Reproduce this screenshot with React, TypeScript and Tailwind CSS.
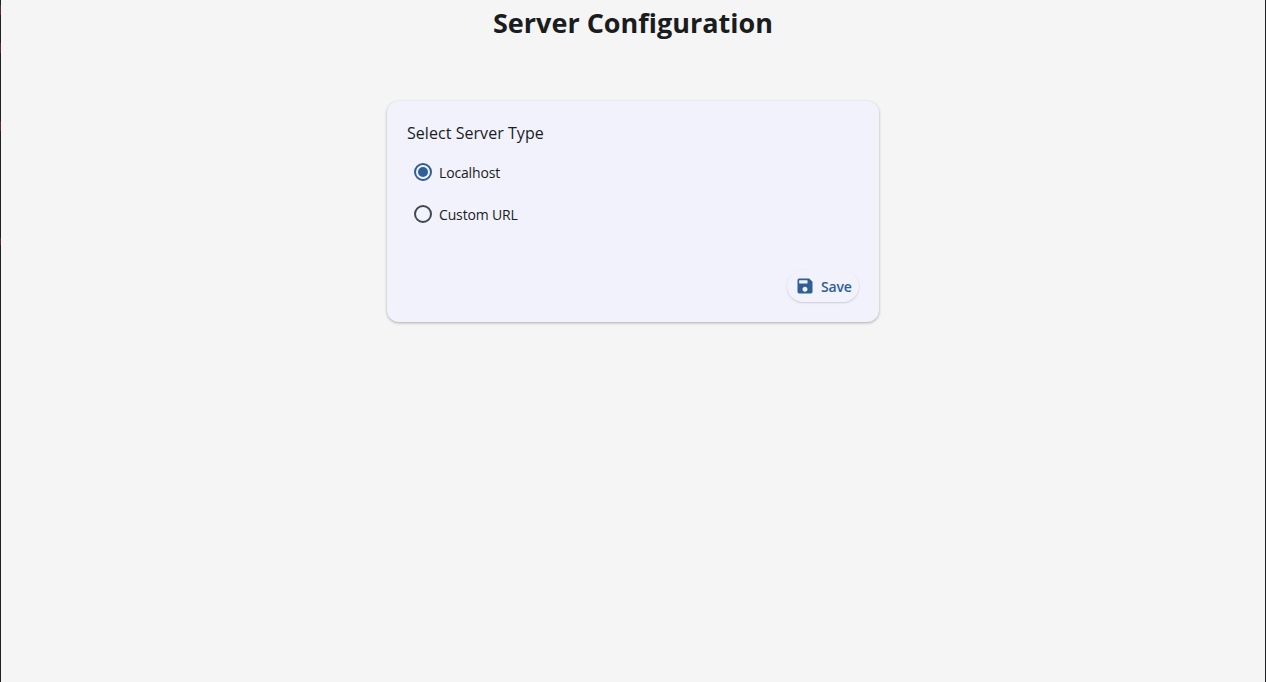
import React from "react"

// faint marks on the window's left edge
const edgeMarks = [
  { top: "top-[5px]", height: "h-[10px]" },
  { top: "top-[43px]", height: "h-[10px]" },
  { top: "top-[121px]", height: "h-[10px]" },
  { top: "top-[238px]", height: "h-[7px]" },
]

function SaveIcon() {
  return (
    <svg width="20" height="20" viewBox="0 0 24 24" fill="currentColor" aria-hidden="true">
      <path d="M17 3H5c-1.11 0-2 .9-2 2v14c0 1.1.89 2 2 2h14c1.1 0 2-.9 2-2V7l-4-4zm-5 16c-1.66 0-3-1.34-3-3s1.34-3 3-3 3 1.34 3 3-1.34 3-3 3zm3-10H5V5h10v4z" />
    </svg>
  )
}

function Radio({ label, checked }: { label: string; checked?: boolean }) {
  return (
    <label className="flex h-[42px] items-center pl-[7px]">
      <span
        className={`mb-[2px] flex h-[18px] w-[18px] items-center justify-center rounded-full border-2 ${
          checked ? "border-[#2f5f96]" : "border-[#44474e]"
        }`}
      >
        {checked && <span className="h-[10px] w-[10px] rounded-full bg-[#2f5f96]" />}
      </span>
      <span className="ml-[7px] text-[14px] leading-5 tracking-[-0.15px] text-[#1a1c1e]">{label}</span>
    </label>
  )
}

export default function App() {
  return (
    <div className="relative flex h-[682px] flex-col items-center border-x border-[#1f2023] bg-[#f5f5f5] font-['Open_Sans','Noto_Sans',sans-serif]">
      {edgeMarks.map((mark) => (
        <span key={mark.top} className={`absolute -left-px w-px bg-[#5a2a38] ${mark.top} ${mark.height}`} />
      ))}
      <h1 className="mt-[4px] text-[27px] leading-[37px] font-bold text-[#1a1c1e]">Server Configuration</h1>
      <div className="mt-[60px] flex h-[221px] w-[492px] flex-col rounded-xl bg-[#f1f2fb] p-5 shadow-[0_1px_3px_rgba(0,0,0,0.3)]">
        <h2 className="text-[16px] leading-6 font-medium tracking-[0.05px] text-[#1a1c1e]">Select Server Type</h2>
        <div className="mt-[7px] flex flex-col">
          <Radio label="Localhost" checked />
          <Radio label="Custom URL" />
        </div>
        <div className="mt-auto flex justify-end">
          <button className="flex h-8 w-[72px] items-center gap-[6px] rounded-full bg-[#f1f2fb] pl-2 text-[14px] font-semibold tracking-[-0.2px] text-[#2f5f96] shadow-[0_1px_2px_rgba(0,0,0,0.16)]">
            <SaveIcon />
            Save
          </button>
        </div>
      </div>
    </div>
  )
}
